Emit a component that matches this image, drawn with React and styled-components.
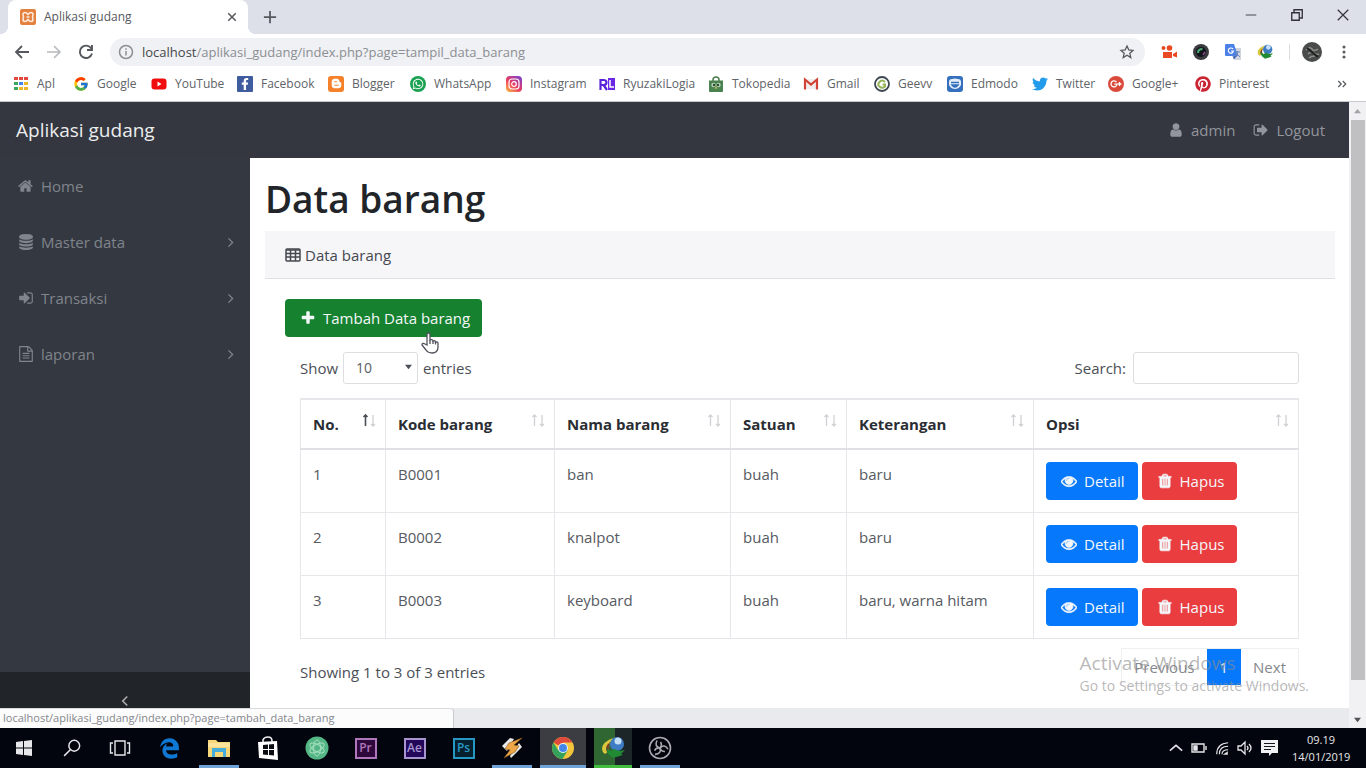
import React from "react";
import styled, { createGlobalStyle, css } from "styled-components";
import { FcGoogle } from "react-icons/fc";
import { FaTwitter, FaPinterest, FaBloggerB, FaInstagram, FaEdgeLegacy, FaFacebookF, FaWhatsapp } from "react-icons/fa";

const GlobalStyle = createGlobalStyle`
  * { box-sizing: border-box; }
  body { margin: 0; background: #fff; font-family: "Open Sans", "Noto Sans", sans-serif; font-size: 15px; line-height: 24px; color: #4b4f56; }
  button, input, select { font: inherit; }
  svg { display: block; flex: none; }
  a { color: inherit; text-decoration: none; }
`;

/* ---------- layout ---------- */
const Desktop = styled.div`
  display: flex;
  flex-direction: column;
  height: 100vh;
  overflow: hidden;
`;
const Browser = styled.div`
  position: relative;
  flex: 1;
  min-height: 0;
  display: flex;
  flex-direction: column;
`;
const PlainButton = styled.button`
  display: flex;
  align-items: center;
  justify-content: center;
  padding: 0;
  border: 0;
  background: none;
  color: ${(p) => p.$color || "#55585d"};
  width: ${(p) => (p.$w ? p.$w + "px" : "auto")};
`;

/* ---------- browser chrome ---------- */
const TabStrip = styled.div`
  display: flex;
  height: 34px;
  padding-left: 8px;
  background: #dee0e9;
`;
const Tab = styled.div`
  position: relative;
  display: flex;
  align-items: center;
  gap: 8px;
  width: 240px;
  padding: 0 10px 0 12px;
  background: #fff;
  border-radius: 8px 8px 0 0;
  font-size: 12px;
  color: #55585d;
  span { flex: 1; }
  &::before, &::after {
    content: "";
    position: absolute;
    bottom: 0;
    width: 8px;
    height: 8px;
  }
  &::before { left: -8px; background: radial-gradient(circle at 0 0, transparent 8px, #fff 8px); }
  &::after { right: -8px; background: radial-gradient(circle at 100% 0, transparent 8px, #fff 8px); }
`;
const WindowButtons = styled.div`
  display: flex;
  margin-left: auto;
  height: 30px;
`;
const Toolbar = styled.div`
  display: flex;
  align-items: center;
  height: 36px;
  padding: 0 16px 0 6px;
  background: #fff;
`;
const Address = styled.div`
  flex: 1;
  display: flex;
  align-items: center;
  gap: 8px;
  height: 28px;
  margin: 0 8px;
  padding: 0 10px 0 8px;
  border-radius: 14px;
  background: #f0f1f4;
  font-size: 13px;
  color: #8b8e93;
  p { margin: 0; flex: 1; }
  b { font-weight: 400; color: #45484c; }
`;
const Extensions = styled.div`
  display: flex;
  align-items: center;
  gap: 16px;
  padding-left: 8px;
`;
const Divider = styled.i`
  width: 1px;
  height: 16px;
  margin-right: -4px;
  background: #dcdde0;
`;
const Bookmarks = styled.nav`
  display: flex;
  align-items: center;
  height: 32px;
  padding: 0 18px 4px 13px;
  border-bottom: 1px solid #c8cacf;
  background: #fff;
  font-size: 12px;
  color: #606368;
  & > button { margin-left: auto; }
`;
const Bookmark = styled.a`
  display: flex;
  align-items: center;
  gap: 8px;
  width: ${(p) => p.$w}px;
  white-space: nowrap;
`;
const Badge = styled.span`
  display: flex;
  align-items: center;
  justify-content: center;
  width: 16px;
  height: 16px;
  border-radius: ${(p) => p.$r || 3}px;
  background: ${(p) => p.$bg};
  color: ${(p) => p.$fg || "#fff"};
`;

/* ---------- web page ---------- */
const Viewport = styled.div`
  flex: 1;
  min-height: 0;
  display: flex;
`;
const Site = styled.div`
  flex: 1;
  display: flex;
  flex-direction: column;
  background: #343841;
`;
const Navbar = styled.header`
  display: flex;
  align-items: center;
  justify-content: space-between;
  height: 56px;
  padding: 0 24px 0 16px;
  background: #343740;
  color: #92959b;
  nav { display: flex; gap: 18px; }
`;
const Brand = styled.a`
  font-size: 19px;
  color: #eceded;
`;
const NavLink = styled.a`
  display: flex;
  align-items: center;
  gap: 7px;
`;
const Columns = styled.div`
  flex: 1;
  min-height: 0;
  display: flex;
`;
const Sidebar = styled.aside`
  display: flex;
  flex-direction: column;
  width: 250px;
  background: #343841;
  color: #80848b;
`;
const SideLink = styled(NavLink)`
  height: 56px;
  padding: 0 14px 0 18px;
  span { flex: 1; }
`;
const Toggler = styled.button`
  display: flex;
  align-items: center;
  justify-content: center;
  height: 56px;
  margin-top: auto;
  padding: 2px 0 0;
  border: 0;
  background: #212428;
  color: #a9abad;
`;
const Content = styled.main`
  flex: 1;
  display: flex;
  flex-direction: column;
  background: #fff;
`;
const Main = styled.section`
  flex: 1;
  min-height: 0;
  padding: 17px 14px 0 15px;
`;
const Title = styled.h1`
  margin: 0 0 8px;
  font-size: 37px;
  font-weight: 600;
  line-height: 48px;
  color: #212529;
`;
const CardHeader = styled.div`
  display: flex;
  align-items: center;
  gap: 4px;
  height: 48px;
  padding: 0 20px;
  border-bottom: 1px solid #dfe0e3;
  background: #f6f6f9;
  color: #45484f;
`;
const CardBody = styled.div`
  padding: 20px 20px 0;
`;
const tones = { green: "#16822f", blue: "#0578fb", red: "#e93d40" };
const Button = styled.button`
  display: inline-flex;
  align-items: center;
  gap: 7px;
  height: 38px;
  padding: 0 ${(p) => (p.$tone === "green" ? 12 : 13)}px 0 15px;
  border: 0;
  border-radius: 4px;
  background: ${(p) => tones[p.$tone]};
  color: #f4f7fa;
  vertical-align: top;
  & + & { margin-left: 4px; }
`;
const DataArea = styled.div`
  padding: 0 16px 0 15px;
`;
const Controls = styled.div`
  display: flex;
  justify-content: space-between;
  padding: 15px 0 14px;
  label { display: flex; align-items: center; gap: 5px; }
`;
const field = css`
  height: 32px;
  border: 1px solid #dcdee1;
  border-radius: 3px;
  background: #fff;
  color: #5b5e64;
`;
const SelectWrap = styled.span`
  position: relative;
  svg { position: absolute; right: 6px; top: 11px; pointer-events: none; }
`;
const Select = styled.select`
  ${field}
  display: block;
  width: 75px;
  padding: 0 12px;
  appearance: none;
  font-size: 14px;
`;
const Search = styled.input`
  ${field}
  width: 166px;
  margin-left: 2px;
`;
const Table = styled.table`
  width: 100%;
  border-collapse: collapse;
  table-layout: fixed;
  color: #565a61;
  th, td {
    padding: 12px;
    border: 1px solid #e6e7ea;
    text-align: left;
    vertical-align: top;
  }
  th {
    border-top-width: 2px;
    border-bottom: 2px solid #dfe0e4;
    color: #2a2d33;
    font-weight: 700;
    white-space: nowrap;
  }
  td { height: 63px; }
`;
const HeadCell = styled.div`
  display: flex;
  justify-content: space-between;
  margin-right: -4px;
`;
const TableFooter = styled.div`
  display: flex;
  justify-content: space-between;
  padding-top: 9px;
  p { margin: 0; padding-top: 12px; }
`;
const Pager = styled.nav`
  display: flex;
  border: 1px solid #eeeff1;
`;
const PageButton = styled.button`
  height: 36px;
  padding: 0 ${(p) => (p.$active ? 13 : 12)}px;
  border: 0;
  background: ${(p) => (p.$active ? "#0578fb" : "#fff")};
  color: ${(p) => (p.$active ? "#eaf3ff" : "#85888d")};
`;
const SiteFooter = styled.footer`
  height: 20px;
  background: #e8eaee;
`;
const Scrollbar = styled.div`
  display: flex;
  flex-direction: column;
  width: 17px;
  background: #f1f1f4;
`;
const ScrollArrow = styled.button`
  display: flex;
  align-items: center;
  justify-content: center;
  height: 18px;
  padding: 0;
  border: 0;
  background: none;
  color: ${(p) => p.$color};
`;
const Thumb = styled.div`
  flex: 560;
  margin: 0 1px 0 2px;
  background: #c0c0c3;
`;
const Rest = styled.div`
  flex: 30;
`;
const StatusBubble = styled.div`
  position: absolute;
  left: 0;
  bottom: 0;
  width: 454px;
  height: 20px;
  padding-left: 3px;
  border-top: 1px solid #d8d9dc;
  border-right: 1px solid #c9cbcf;
  border-radius: 0 4px 0 0;
  background: #fcfcfd;
  font-size: 11px;
  line-height: 18px;
  color: #85878b;
`;
const Watermark = styled.div`
  position: absolute;
  right: 57px;
  bottom: 32px;
  color: rgba(140, 140, 140, 0.62);
  font-size: 14px;
  line-height: 20px;
  pointer-events: none;
  strong { display: block; font-size: 19px; font-weight: 400; line-height: 26px; }
`;
const Pointer = styled.svg`
  position: absolute;
  left: 420px;
  top: 331px;
`;

/* ---------- taskbar ---------- */
const Taskbar = styled.footer`
  display: flex;
  height: 40px;
  background: #02050d;
  color: #e6e7ea;
`;
const Task = styled.button`
  display: flex;
  align-items: center;
  justify-content: center;
  width: ${(p) => p.$w || 49}px;
  padding: 0 4px;
  border: 0;
  color: #e6e7ea;
  background: ${(p) => p.$bg || "none"};
  background-clip: content-box;
  position: relative;
  &::after {
    content: "";
    position: absolute;
    left: 4px;
    right: 4px;
    bottom: 0;
    height: 3px;
    background: ${(p) => p.$line || "none"};
  }
`;
const Adobe = styled.span`
  display: flex;
  align-items: center;
  justify-content: center;
  width: 22px;
  height: 21px;
  border: 2px solid ${(p) => p.$c};
  background: ${(p) => p.$bg};
  color: ${(p) => p.$c};
  font-size: 12px;
  font-weight: 600;
`;
const Tray = styled.div`
  display: flex;
  align-items: center;
  gap: 8px;
  margin-left: auto;
  padding-right: 16px;
`;
const Clock = styled.time`
  width: 58px;
  margin-left: 6px;
  font-size: 11px;
  line-height: 17px;
  text-align: center;
`;

/* ---------- icons ---------- */
const solid = {
  home: "M1408 992v480q0 26-19 45t-45 19h-384v-384h-256v384h-384q-26 0-45-19t-19-45v-480q0-1 .5-3t.5-3l575-474 575 474q1 2 1 6zm223-69l-62 74q-8 9-21 11h-3q-13 0-21-7l-692-577-692 577q-12 8-24 7-13-2-21-11l-62-74q-8-10-7-23.5t11-21.5l719-599q32-26 76-26t76 26l244 204v-195q0-14 9-23t23-9h192q14 0 23 9t9 23v408l219 182q10 8 11 21.5t-7 23.5z",
  database: "M896 768q237 0 443-43t325-127v170q0 69-103 128t-280 93.5-385 34.5-385-34.5-280-93.5-103-128v-170q119 84 325 127t443 43zm0 768q237 0 443-43t325-127v170q0 69-103 128t-280 93.5-385 34.5-385-34.5-280-93.5-103-128v-170q119 84 325 127t443 43zm0-384q237 0 443-43t325-127v170q0 69-103 128t-280 93.5-385 34.5-385-34.5-280-93.5-103-128v-170q119 84 325 127t443 43zm0-1152q208 0 385 34.5t280 93.5 103 128v128q0 69-103 128t-280 93.5-385 34.5-385-34.5-280-93.5-103-128v-128q0-69 103-128t280-93.5 385-34.5z",
  signIn: "M1312 896q0 26-19 45l-544 544q-19 19-45 19t-45-19-19-45v-288h-448q-26 0-45-19t-19-45v-384q0-26 19-45t45-19h448v-288q0-26 19-45t45-19 45 19l544 544q19 19 19 45zm352-352v704q0 119-84.5 203.5t-203.5 84.5h-320q-13 0-22.5-9.5t-9.5-22.5q0-4-1-20t-.5-26.5 3-23.5 10-19.5 20.5-6.5h320q66 0 113-47t47-113v-704q0-66-47-113t-113-47h-312l-11.5-1-11.5-3-8-5.5-7-9-2-13.5q0-4-1-20t-.5-26.5 3-23.5 10-19.5 20.5-6.5h320q119 0 203.5 84.5t84.5 203.5z",
  signOut: "M704 1440q0 4 1 20t.5 26.5-3 23.5-10 19.5-20.5 6.5h-320q-119 0-203.5-84.5t-84.5-203.5v-704q0-119 84.5-203.5t203.5-84.5h320q13 0 22.5 9.5t9.5 22.5q0 4 1 20t.5 26.5-3 23.5-10 19.5-20.5 6.5h-320q-66 0-113 47t-47 113v704q0 66 47 113t113 47h312l11.5 1 11.5 3 8 5.5 7 9 2 13.5zm928-544q0 26-19 45l-544 544q-19 19-45 19t-45-19-19-45v-288h-448q-26 0-45-19t-19-45v-384q0-26 19-45t45-19h448v-288q0-26 19-45t45-19 45 19l544 544q19 19 19 45z",
  user: "M1536 1399q0 109-62.5 187t-150.5 78h-854q-88 0-150.5-78t-62.5-187q0-85 8.5-160.5t31.5-152 58.5-131 94-89 134.5-34.5q131 128 313 128t313-128q76 0 134.5 34.5t94 89 58.5 131 31.5 152 8.5 160.5zm-256-887q0 159-112.5 271.5t-271.5 112.5-271.5-112.5-112.5-271.5 112.5-271.5 271.5-112.5 271.5 112.5 112.5 271.5z",
  plus: "M1600 736v192q0 40-28 68t-68 28h-416v416q0 40-28 68t-68 28h-192q-40 0-68-28t-28-68v-416h-416q-40 0-68-28t-28-68v-192q0-40 28-68t68-28h416v-416q0-40 28-68t68-28h192q40 0 68 28t28 68v416h416q40 0 68 28t28 68z",
  eye: "M1664 960q-152-236-381-353 61 104 61 225 0 185-131.5 316.5t-316.5 131.5-316.5-131.5-131.5-316.5q0-121 61-225-229 117-381 353 133 205 333.5 326.5t434.5 121.5 434.5-121.5 333.5-326.5zm-720-384q0-20-14-34t-34-14q-125 0-214.5 89.5t-89.5 214.5q0 20 14 34t34 14 34-14 14-34q0-86 61-147t147-61q20 0 34-14t14-34zm848 384q0 34-20 69-140 230-376.5 368.5t-499.5 138.5-499.5-139-376.5-368q-20-35-20-69t20-69q140-229 376.5-368t499.5-139 499.5 139 376.5 368q20 35 20 69z",
  trash: "M704 1376v-704q0-14-9-23t-23-9h-64q-14 0-23 9t-9 23v704q0 14 9 23t23 9h64q14 0 23-9t9-23zm256 0v-704q0-14-9-23t-23-9h-64q-14 0-23 9t-9 23v704q0 14 9 23t23 9h64q14 0 23-9t9-23zm256 0v-704q0-14-9-23t-23-9h-64q-14 0-23 9t-9 23v704q0 14 9 23t23 9h64q14 0 23-9t9-23zm-544-992h448l-48-117q-7-9-17-11h-317q-10 2-17 11zm928 32v64q0 14-9 23t-23 9h-96v948q0 83-47 143.5t-113 60.5h-832q-66 0-113-58.5t-47-141.5v-952h-96q-14 0-23-9t-9-23v-64q0-14 9-23t23-9h309l70-167q15-37 54-63t79-26h320q40 0 79 26t54 63l70 167h309q14 0 23 9t9 23z",
  file: "M1596 380q28 28 48 76t20 88v1152q0 40-28 68t-68 28h-1344q-40 0-68-28t-28-68v-1600q0-40 28-68t68-28h896q40 0 88 20t76 48zm-444-244v376h376q-10-29-22-41l-313-313q-12-12-41-22zm384 1528v-1024h-416q-40 0-68-28t-28-68v-416h-768v1536h1280zm-1024-864q0-14 9-23t23-9h704q14 0 23 9t9 23v64q0 14-9 23t-23 9h-704q-14 0-23-9t-9-23v-64zm736 224q14 0 23 9t9 23v64q0 14-9 23t-23 9h-704q-14 0-23-9t-9-23v-64q0-14 9-23t23-9h704zm0 256q14 0 23 9t9 23v64q0 14-9 23t-23 9h-704q-14 0-23-9t-9-23v-64q0-14 9-23t23-9h704z",
};
const Icon = ({ name }) => (
  <svg width="16" height="16" viewBox="0 0 1792 1792" fill="currentColor" stroke="currentColor" strokeWidth={name === "eye" || name === "trash" ? 70 : 0} aria-hidden="true">
    <path d={solid[name]} />
  </svg>
);
const Line = ({ d, size = 16, w = 2, fill = "none", box = 16, children }) => (
  <svg width={size} height={size} viewBox={`0 0 ${box} ${box}`} fill={fill} stroke="currentColor" strokeWidth={w} aria-hidden="true">
    {d && <path d={d} />}
    {children}
  </svg>
);
const Sort = ({ active }) => (
  <svg width="16" height="16" viewBox="0 0 16 16" fill="none" stroke="#cfd1d5" strokeWidth="1.3" aria-hidden="true">
    <path d="M4.500 14V3M2.500 5L4.500 3l2 2" stroke={active ? "#4d5058" : "#cfd1d5"} strokeWidth={active ? 1.6 : 1.3} />
    <path d="M12 3v11M10 12l2 2 2-2" />
  </svg>
);

const AppsIcon = () => (
  <svg width="16" height="16" viewBox="0 0 16 16">
    {["#e2483d", "#e2483d", "#e2483d", "#3ba55a", "#4382e8", "#eeb52b", "#3ba55a", "#eeb52b", "#eeb52b"].map((c, i) => (
      <rect key={i} x={1 + (i % 3) * 5} y={1 + Math.floor(i / 3) * 5} width="4" height="3" fill={c} />
    ))}
  </svg>
);
const YouTube = () => (
  <svg width="16" height="16" viewBox="0 0 16 16"><rect x="0.500" y="2.500" width="15" height="11" rx="3" fill="#f00e0e" /><path d="M6.500 5.500v5l4-2.500z" fill="#fff" /></svg>
);
const Instagram = () => (
  <svg width="16" height="16" viewBox="0 0 16 16">
    <defs><linearGradient id="ig" x1="0" y1="1" x2="0.800" y2="0"><stop offset="0" stopColor="#fdc142" /><stop offset="0.500" stopColor="#ed3a5d" /><stop offset="1" stopColor="#8240c8" /></linearGradient></defs>
    <rect width="16" height="16" rx="4" fill="url(#ig)" />
    <rect x="3" y="3" width="10" height="10" rx="3" fill="none" stroke="#fff" strokeWidth="1.200" />
    <circle cx="8" cy="8" r="2.300" fill="none" stroke="#fff" strokeWidth="1.200" />
  </svg>
);
const Ryuzaki = () => (
  <svg width="16" height="16" viewBox="0 0 16 16">
    <path d="M1.500 14V4h3q3 0 3 2.500T4.500 9H2M4.500 9L8 14" fill="none" stroke="#5a22d8" strokeWidth="2.200" />
    <rect x="9" y="2" width="7" height="12" fill="#6a28e6" /><path d="M11 4v7h4" fill="none" stroke="#fff" strokeWidth="1.500" />
  </svg>
);
const Tokopedia = () => (
  <svg width="16" height="16" viewBox="0 0 16 16">
    <path d="M5 5V4q0-3 3-3t3 3v1" fill="none" stroke="#4c7d50" strokeWidth="1.500" />
    <path d="M1 4.500h14V15q0 1-1 1H2q-1 0-1-1z" fill="#4a8350" />
    <circle cx="5.500" cy="9" r="2.200" fill="#b9d2ba" /><circle cx="10.500" cy="9" r="2.200" fill="#b9d2ba" />
    <circle cx="6" cy="9" r="1.200" fill="#2c4c30" /><circle cx="10" cy="9" r="1.200" fill="#2c4c30" /><path d="M8 10.500l1.500 2h-3z" fill="#d8c35b" />
  </svg>
);
const Gmail = () => (
  <svg width="16" height="16" viewBox="0 0 16 16"><path d="M2 3h12v10H2z" fill="#f1eeee" /><path d="M2 13.500V3.500L8 8.500l6-5v10" fill="none" stroke="#d24236" strokeWidth="2.200" /></svg>
);
const Geevv = () => (
  <svg width="16" height="16" viewBox="0 0 16 16"><circle cx="8" cy="8" r="7" fill="#fff" stroke="#3b4650" strokeWidth="1.800" /><path d="M11 6q-3-3-5.500 0t0 4.500Q8 13 11 10.500V8.500H8.500" fill="none" stroke="#94b357" strokeWidth="2" /></svg>
);
const Edmodo = () => (
  <svg width="16" height="16" viewBox="0 0 16 16"><rect width="16" height="16" rx="3" fill="#3470bd" /><path d="M2 6q0-3 3-3 3-1 6 0 3 0 3 3v3q-2 4-6 4T2 9z" fill="#e4eef9" /><path d="M4 6.500h8M5 9q3 4 6 0z" fill="#3470bd" stroke="#3470bd" strokeWidth="1.500" /></svg>
);
const GooglePlus = () => (
  <svg width="16" height="16" viewBox="0 0 16 16"><circle cx="8" cy="8" r="8" fill="#d94a3d" /><path d="M8.500 6.200A3 3 0 1 0 9 8.200H6.300M11.500 6v4M9.800 8h3.600" fill="none" stroke="#fff" strokeWidth="1.300" /></svg>
);

const bookmarks = [
  ["Apl", <AppsIcon />, 60],
  ["Google", <FcGoogle size={16} />, 78],
  ["YouTube", <YouTube />, 86],
  ["Facebook", <Badge $bg="#3e5c9e" $r={1}><FaFacebookF size={12} /></Badge>, 91],
  ["Blogger", <Badge $bg="#f5812a"><FaBloggerB size={11} /></Badge>, 82],
  ["WhatsApp", <Badge $bg="#1ba253" $r={8}><FaWhatsapp size={12} /></Badge>, 96],
  ["Instagram", <Instagram />, 93],
  ["RyuzakiLogia", <Ryuzaki />, 109],
  ["Tokopedia", <Tokopedia />, 95],
  ["Gmail", <Gmail />, 71],
  ["Geevv", <Geevv />, 73],
  ["Edmodo", <Edmodo />, 85],
  ["Twitter", <FaTwitter size={16} color="#249bea" />, 76],
  ["Google+", <GooglePlus />, 87],
  ["Pinterest", <FaPinterest size={16} color="#ca2432" />, 80],
];

const Chrome = () => (
  <svg width="24" height="24" viewBox="0 0 24 24">
    <circle cx="12" cy="12" r="11" fill="#f2c53c" />
    <path d="M12 12L2.500 6.500A11 11 0 0 1 21.500 6.500H12z" fill="#df4a3c" />
    <path d="M2.500 6.500A11 11 0 0 0 11.500 23L17 14 7 14z" fill="#33a35b" />
    <circle cx="12" cy="12" r="5" fill="#f3f5f8" /><circle cx="12" cy="12" r="4" fill="#4486ea" />
  </svg>
);
const Downloader = ({ size }) => (
  <svg width={size} height={size} viewBox="0 0 24 24">
    <circle cx="16" cy="8" r="7" fill="#3e7cc4" /><circle cx="17" cy="5" r="3.500" fill="#c3def5" />
    <path d="M12 2Q1 6 1 13q0 3 3 5l4-3Q6 9 12 2z" fill="#d9c83d" />
    <path d="M9 6Q3 11 6 16l3 1-1-3Q7 10 9 6z" fill="#7a3c2a" />
    <path d="M5 12l5 3 3-2 5 2 6-1-4 4 2 1-10 3-5-4z" fill="#218a32" />
  </svg>
);
const Camera = () => (
  <svg width="16" height="16" viewBox="0 0 16 16" fill="#ea4a23"><circle cx="2.500" cy="4" r="2" /><circle cx="8.500" cy="4" r="2.800" /><path d="M2 8h9v6H2zM12 10l4-2.500v6L12 12z" /></svg>
);
const Lens = () => (
  <svg width="16" height="16" viewBox="0 0 16 16"><circle cx="8" cy="8" r="8" fill="#3a3c3f" /><circle cx="8" cy="8" r="5" fill="#11151b" /><path d="M5 9q0-4 4.500-4" fill="none" stroke="#4dac78" strokeWidth="2" /><path d="M10 11l2-3" stroke="#8a4b8d" strokeWidth="1.500" /></svg>
);
const Translate = () => (
  <svg width="16" height="16" viewBox="0 0 16 16"><path d="M6 4h10v12H9z" fill="#d0d5de" /><path d="M0 1q0-1 1-1h8l4 12H1q-1 0-1-1z" fill="#4c82e7" /><path d="M8 5A2.600 2.600 0 1 0 8.500 7H6" fill="none" stroke="#fff" strokeWidth="1.200" /><path d="M8 12h4l-3 3zM10 8h5M12.500 7q0 4-2 5M11 9l4 4" fill="#315bb2" stroke="#6c87bf" /></svg>
);
const Avatar = () => (
  <svg width="20" height="20" viewBox="0 0 20 20"><circle cx="10" cy="10" r="10" fill="#4a4c4b" /><path d="M4 8q4-4 6-1t6 0M6 12q3-3 6-1t5 1M7 16q2-2 6-2" fill="none" stroke="#8b8e89" strokeWidth="1.500" /><path d="M5 6l6 5 5 4" stroke="#202322" strokeWidth="2" /></svg>
);
const Xampp = () => (
  <svg width="16" height="16" viewBox="0 0 16 16"><rect width="16" height="16" rx="2" fill="#e4813f" /><path d="M5 3.500q-3 0-1.500 4.500Q2 12.500 5 12.500q1.500 0 3-2 1.500 2 3 2 3 0 1.500-4.500Q14 3.500 11 3.500q-1.500 0-3 2-1.500-2-3-2zM6.500 8h3" fill="none" stroke="#fbe9da" strokeWidth="1.600" /></svg>
);
const Triangle = ({ down, size = 8 }) => (
  <svg width={size} height={size} viewBox="0 0 8 8" fill="currentColor" aria-hidden="true"><path d={down ? "M0 2h8L4 7z" : "M0 6h8L4 1z"} /></svg>
);

const menu = [
  ["Home", "home", false],
  ["Master data", "database", true],
  ["Transaksi", "signIn", true],
  ["laporan", "file", true],
];
const columns = [["No.", 85], ["Kode barang", 169], ["Nama barang", 176], ["Satuan", 116], ["Keterangan", 187], ["Opsi"]];
const items = [
  ["1", "B0001", "ban", "buah", "baru"],
  ["2", "B0002", "knalpot", "buah", "baru"],
  ["3", "B0003", "keyboard", "buah", "baru, warna hitam"],
];

export default function App() {
  return (
    <Desktop>
      <GlobalStyle />
      <Browser>
        <TabStrip>
          <Tab>
            <Xampp />
            <span>Aplikasi gudang</span>
            <PlainButton $w={12} aria-label="Close tab"><Line size={12} w={2} d="M3 3l10 10M13 3L3 13" /></PlainButton>
          </Tab>
          <PlainButton $w={44} aria-label="New tab"><Line size={14} w={2} d="M8 1v14M1 8h14" /></PlainButton>
          <WindowButtons>
            <PlainButton $w={46} aria-label="Minimize"><Line size={12} w={1.500} d="M1 8h14" /></PlainButton>
            <PlainButton $w={46} $color="#303238" aria-label="Restore"><Line size={12} w={1.800} d="M1 5h10v10H1zM4 5V1h11v11h-4" /></PlainButton>
            <PlainButton $w={46} $color="#303238" aria-label="Close"><Line size={12} w={1.600} d="M1 1l14 14M15 1L1 15" /></PlainButton>
          </WindowButtons>
        </TabStrip>
        <Toolbar>
          <PlainButton $w={32} aria-label="Back"><Line w={1.800} d="M15 8H2M8 2L2 8l6 6" /></PlainButton>
          <PlainButton $w={32} $color="#b7b9bc" aria-label="Forward"><Line w={1.600} d="M1 8h13M8 2l6 6-6 6" /></PlainButton>
          <PlainButton $w={32} aria-label="Reload"><Line w={1.900} d="M13.300 4.500A6.200 6.200 0 1 0 14 9.500M14 1v5H9" /></PlainButton>
          <Address>
            <Line w={1.500}><circle cx="8" cy="8" r="6.500" /><path d="M8 7v4.500M8 4.200v1.600" /></Line>
            <p><b>localhost</b>/aplikasi_gudang/index.php?page=tampil_data_barang</p>
            <PlainButton aria-label="Bookmark"><Line w={1.300} d="M8 2l1.800 4 4.200.4-3.200 2.900 1 4.300L8 11.300l-3.800 2.300 1-4.300L2 6.400 6.200 6z" /></PlainButton>
          </Address>
          <Extensions>
            <Camera /><Lens /><Translate /><Downloader size={16} />
            <Divider /><Avatar />
            <PlainButton $w={12} aria-label="Menu"><svg width="4" height="16" viewBox="0 0 4 16" fill="currentColor"><circle cx="2" cy="3" r="1.500" /><circle cx="2" cy="8" r="1.500" /><circle cx="2" cy="13" r="1.500" /></svg></PlainButton>
          </Extensions>
        </Toolbar>
        <Bookmarks>
          {bookmarks.map(([label, icon, w]) => (
            <Bookmark key={label} href="#" $w={w}>{icon}{label}</Bookmark>
          ))}
          <PlainButton aria-label="More bookmarks"><Line size={12} w={1.600} d="M3 4l4 4-4 4M9 4l4 4-4 4" /></PlainButton>
        </Bookmarks>
        <Viewport>
          <Site>
            <Navbar>
              <Brand href="#">Aplikasi gudang</Brand>
              <nav>
                <NavLink href="#"><Icon name="user" />admin</NavLink>
                <NavLink href="#"><Icon name="signOut" />Logout</NavLink>
              </nav>
            </Navbar>
            <Columns>
              <Sidebar>
                {menu.map(([label, icon, more]) => (
                  <SideLink key={label} href="#">
                    <Icon name={icon} /><span>{label}</span>
                    {more && <Line size={11} w={2} d="M5 2l6 6-6 6" />}
                  </SideLink>
                ))}
                <Toggler aria-label="Collapse sidebar"><Line size={12} w={2.200} d="M11 2L5 8l6 6" /></Toggler>
              </Sidebar>
              <Content>
                <Main>
                  <Title>Data barang</Title>
                  <CardHeader>
                    <Line size={16} w={1.500}><rect x="1" y="2" width="14" height="12" rx="1" /><path d="M1 3h14M1 6.500h14M1 10h14M5.500 3v11M10.500 3v11" /></Line>
                    Data barang
                  </CardHeader>
                  <CardBody>
                    <Button $tone="green"><Icon name="plus" />Tambah Data barang</Button>
                    <DataArea>
                      <Controls>
                        <label>
                          Show
                          <SelectWrap>
                            <Select defaultValue="10"><option>10</option><option>25</option><option>50</option></Select>
                            <Triangle down size={7} />
                          </SelectWrap>
                          entries
                        </label>
                        <label>Search: <Search type="search" /></label>
                      </Controls>
                      <Table>
                        <colgroup>{columns.map(([name, w]) => <col key={name} width={w} />)}</colgroup>
                        <thead>
                          <tr>
                            {columns.map(([name], i) => (
                              <th key={name}><HeadCell>{name}<Sort active={i === 0} /></HeadCell></th>
                            ))}
                          </tr>
                        </thead>
                        <tbody>
                          {items.map((cells) => (
                            <tr key={cells[0]}>
                              {cells.map((c, i) => <td key={i}>{c}</td>)}
                              <td>
                                <Button $tone="blue"><Icon name="eye" />Detail</Button>
                                <Button $tone="red"><Icon name="trash" />Hapus</Button>
                              </td>
                            </tr>
                          ))}
                        </tbody>
                      </Table>
                      <TableFooter>
                        <p>Showing 1 to 3 of 3 entries</p>
                        <Pager>
                          <PageButton>Previous</PageButton>
                          <PageButton $active>1</PageButton>
                          <PageButton>Next</PageButton>
                        </Pager>
                      </TableFooter>
                    </DataArea>
                  </CardBody>
                </Main>
                <SiteFooter />
              </Content>
            </Columns>
          </Site>
          <Scrollbar>
            <ScrollArrow $color="#a2a3a6" aria-label="Scroll up"><Triangle size={7} /></ScrollArrow>
            <Thumb />
            <Rest />
            <ScrollArrow $color="#505256" aria-label="Scroll down"><Triangle down size={7} /></ScrollArrow>
          </Scrollbar>
        </Viewport>
        <StatusBubble>localhost/aplikasi_gudang/index.php?page=tambah_data_barang</StatusBubble>
        <Watermark><strong>Activate Windows</strong>Go to Settings to activate Windows.</Watermark>
        <Pointer width="20" height="24" viewBox="0 0 20 24" fill="#fff" stroke="#50525c" strokeWidth="1.300">
          <path d="M7 14V3.500q0-1.500 1.500-1.500T10 3.500V9q3-1 3 1 2.500-1 2.500 1.200 2.500-.7 2.500 1.300V16q0 6-6 6-4 0-6-3l-4-5q0-2 2-1.500z" />
          <path d="M10 9v4M13 10v3M15.500 11v2.500" />
        </Pointer>
      </Browser>
      <Taskbar>
        <Task $w={48} aria-label="Start"><svg width="18" height="18" viewBox="0 0 18 18" fill="currentColor"><path d="M1 3l7-1v6.500H1zM9 2l8-1v7.500H9zM1 9.500h7V16l-7-1zM9 9.500h8V17l-8-1z" /></svg></Task>
        <Task $w={48} aria-label="Search"><Line size={18} w={1.300}><circle cx="10" cy="6" r="4.800" /><path d="M6.500 9.500L1 15" /></Line></Task>
        <Task $w={48} aria-label="Task view"><svg width="22" height="18" viewBox="0 0 22 18" fill="none" stroke="currentColor" strokeWidth="1.400"><path d="M6 2h10v14H6zM4 4H1.500v10H4M18 4h2.500v10H18" /></svg></Task>
        <Task $w={51} aria-label="Edge"><FaEdgeLegacy size={21} color="#0f78d4" /></Task>
        <Task $w={48} $line="#6fa3d8" aria-label="File Explorer">
          <svg width="22" height="20" viewBox="0 0 22 20"><path d="M0 2h8l2 2h12v15H0z" fill="#f6d678" /><path d="M4 10h14v9h-3v-5H7v5H4z" fill="#46addb" /><path d="M0 5h22v4H0z" fill="#fbe39b" /></svg>
        </Task>
        <Task aria-label="Store"><svg width="22" height="24" viewBox="0 0 22 24"><path d="M6 7V4q1-3 5-3t4 4v2" fill="none" stroke="#eee" strokeWidth="1.600" /><path d="M1 6l19-1 1 19-19-2z" fill="#fff" /><path d="M6 9l5-.5V13H6zM12 8.500l5-.5v5h-5zM6 14h5v5l-5-.5zM12 14h5v5.500l-5-.5z" fill="#0a0c12" /></svg></Task>
        <Task aria-label="Atom"><svg width="24" height="24" viewBox="0 0 24 24" fill="none" stroke="#a3dfbd"><circle cx="12" cy="12" r="11.500" fill="#55b685" stroke="none" /><ellipse cx="12" cy="12" rx="8" ry="3.500" transform="rotate(30 12 12)" /><ellipse cx="12" cy="12" rx="8" ry="3.500" transform="rotate(90 12 12)" /><ellipse cx="12" cy="12" rx="8" ry="3.500" transform="rotate(150 12 12)" /></svg></Task>
        <Task aria-label="Premiere"><Adobe $c="#ae76bb" $bg="#2e083a">Pr</Adobe></Task>
        <Task aria-label="After Effects"><Adobe $c="#a794d0" $bg="#23085a">Ae</Adobe></Task>
        <Task aria-label="Photoshop"><Adobe $c="#2797c4" $bg="#07202d">Ps</Adobe></Task>
        <Task $w={48} $line="#6fa3d8" aria-label="Winamp"><svg width="22" height="22" viewBox="0 0 22 22"><path d="M1 9l8-8 4 1-7 12zM10 21l11-11-3-4-9 13z" fill="#e8e8e8" /><path d="M21 1L8 6 4 12l5 1-6 8 11-6 4-6-5-1z" fill="#eda648" stroke="#8a5a20" strokeWidth=".6" /></svg></Task>
        <Task $w={54} $bg="#3b3d42" $line="#6fa3d8" aria-label="Chrome"><Chrome /></Task>
        <Task $w={46} $bg="linear-gradient(90deg, #2f6631 55%, #1c2527 55%)" $line="#43bd3f" aria-label="Download Manager"><Downloader size={24} /></Task>
        <Task $w={48} $line="#6fa3d8" aria-label="OBS"><svg width="24" height="24" viewBox="0 0 24 24" fill="none" stroke="#a9aaae" strokeWidth="1.600"><circle cx="12" cy="12" r="10.500" />{[0, 120, 240].map((a) => <path key={a} d="M12 12Q6 10.500 9 4.500M12 12q2.500-3 .5-6" transform={`rotate(${a} 12 12)`} />)}</svg></Task>
        <Tray>
          <Line size={14} w={1.800} d="M1 11l7-6 7 6" />
          <svg width="16" height="12" viewBox="0 0 16 12" fill="none" stroke="currentColor" strokeWidth="1.400"><path d="M1 2h12v8H1zM15 4v4" /><path d="M3 4h3v4H3z" fill="currentColor" /></svg>
          <Line size={14} w={1.300} d="M2 15q0-12 13-13M5 15q0-9 10-9M8 15q0-5 7-5M11 15h3v-2z" />
          <Line size={16} w={1.300} d="M1 6h3l4-4v12L4 10H1zM10 6q2 2 0 4M12 4q4 4 0 8" />
          <svg width="17" height="16" viewBox="0 0 17 16"><path d="M0 0h17v13h-6l-3 3v-3H0z" fill="#f2f2f4" /><path d="M3 3.500h11M3 6.500h11M3 9.500h7" stroke="#161820" /></svg>
          <Clock>09.19<br />14/01/2019</Clock>
        </Tray>
      </Taskbar>
    </Desktop>
  );
}
